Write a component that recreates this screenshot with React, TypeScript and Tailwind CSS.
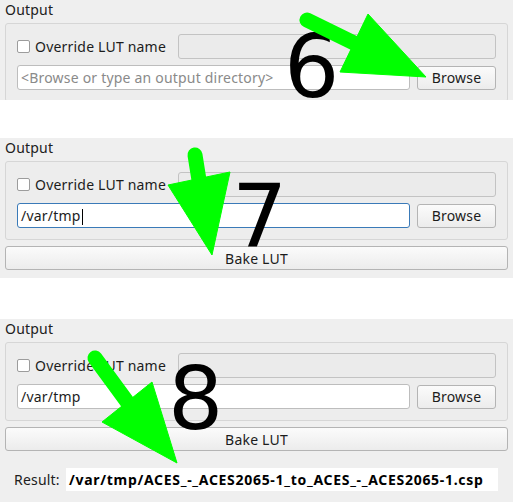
import React from "react";

const font = { fontFamily: '"Noto Sans", "Open Sans", sans-serif' };

function Checkbox() {
  return <div className="w-[13px] h-[13px] bg-white border border-[#9c9c9c] rounded-[2px] shrink-0" />;
}

function Button({ label, className = "" }: { label: string; className?: string }) {
  return (
    <div
      className={
        "h-[24px] flex items-center justify-center rounded-[3px] border border-[#b4b4b4] bg-gradient-to-b from-[#fbfbfb] to-[#ececec] text-[14px] tracking-[0.2px] text-[#1c1c1c] " +
        className
      }
    >
      {label}
    </div>
  );
}

function OutputGroup({ dir, focused }: { dir?: string; focused?: boolean }) {
  return (
    <>
      <div className="h-[23px] pl-[5px] pt-[1px] text-[14px] tracking-[0.2px] text-[#202020] leading-[18px]">Output</div>
      <div className="mx-[5px] border border-[#d6d6d6] rounded-[3px] bg-[#ededed] pt-[10px] pb-[11px] pl-[11px] pr-[11px]">
        <div className="flex items-center h-[25px]">
          <div className="w-[161px] flex items-center gap-[5px] shrink-0">
            <Checkbox />
            <span className="text-[14px] tracking-[0.2px] text-[#1c1c1c]">Override LUT name</span>
          </div>
          <div className="flex-1 h-[25px] rounded-[3px] border border-[#c3c3c3] bg-[#ebebeb]" />
        </div>
        <div className="flex items-center mt-[6px] h-[25px] gap-[7px]">
          <div
            className={
              "flex-1 h-[25px] rounded-[3px] border bg-white flex items-center px-[3px] text-[14px] tracking-[0.2px] " +
              (focused ? "border-[#3a7ab8]" : "border-[#bdbdbd]")
            }
          >
            {dir ? (
              <span className="text-[#1c1c1c]">
                {dir}
                {focused ? <span className="inline-block w-[1px] h-[16px] bg-black align-middle ml-[1px]" /> : null}
              </span>
            ) : (
              <span className="text-[#8a8a8a]">&lt;Browse or type an output directory&gt;</span>
            )}
          </div>
          <Button label="Browse" className="w-[79px]" />
        </div>
      </div>
    </>
  );
}

export default function App() {
  return (
    <div className="relative w-[513px] h-[502px] bg-white overflow-hidden" style={font}>
      <div className="h-[100px] overflow-hidden bg-[#efefef]">
        <OutputGroup />
      </div>
      <div className="h-[38px]" />
      <div className="h-[140px] bg-[#efefef]">
        <OutputGroup dir="/var/tmp" focused />
        <div className="px-[5px] mt-[6px]">
          <Button label="Bake LUT" />
        </div>
      </div>
      <div className="h-[41px]" />
      <div className="h-[183px] bg-[#efefef]">
        <OutputGroup dir="/var/tmp" />
        <div className="px-[5px] mt-[6px]">
          <Button label="Bake LUT" />
        </div>
        <div className="flex items-center mt-[17px] pl-[14px] h-[23px]">
          <span className="w-[52px] text-[14px] tracking-[0.2px] text-[#202020]">Result:</span>
          <div className="w-[432px] h-[23px] bg-white flex items-center pl-[3px] text-[14px] tracking-[0.7px] font-bold text-black">
            /var/tmp/ACES_-_ACES2065-1_to_ACES_-_ACES2065-1.csp
          </div>
        </div>
      </div>

      <div
        className="absolute left-[284px] top-[24px] text-[87px] leading-none text-black"
        style={{ fontFamily: '"DejaVu Sans", sans-serif' }}
      >
        6
      </div>
      <div
        className="absolute left-[232px] top-[174px] text-[87px] leading-none text-black"
        style={{ fontFamily: '"DejaVu Sans", sans-serif' }}
      >
        7
      </div>
      <div
        className="absolute left-[168px] top-[356px] text-[87px] leading-none text-black"
        style={{ fontFamily: '"DejaVu Sans", sans-serif' }}
      >
        8
      </div>

      <svg className="absolute inset-0 pointer-events-none" width="513" height="502" viewBox="0 0 513 502">
        <g fill="#00ff00" stroke="#00ff00">
          <line x1="307" y1="20" x2="356" y2="44" strokeWidth="15" strokeLinecap="round" />
          <polygon points="368,14 340,72 426,77" strokeWidth="1" />
          <line x1="195" y1="155" x2="199" y2="180" strokeWidth="15" strokeLinecap="round" />
          <polygon points="230,172 168,185 212,255" strokeWidth="1" />
          <line x1="95" y1="358" x2="128" y2="403" strokeWidth="15" strokeLinecap="round" />
          <polygon points="152,382 102,422 177,463" strokeWidth="1" />
        </g>
      </svg>
    </div>
  );
}
